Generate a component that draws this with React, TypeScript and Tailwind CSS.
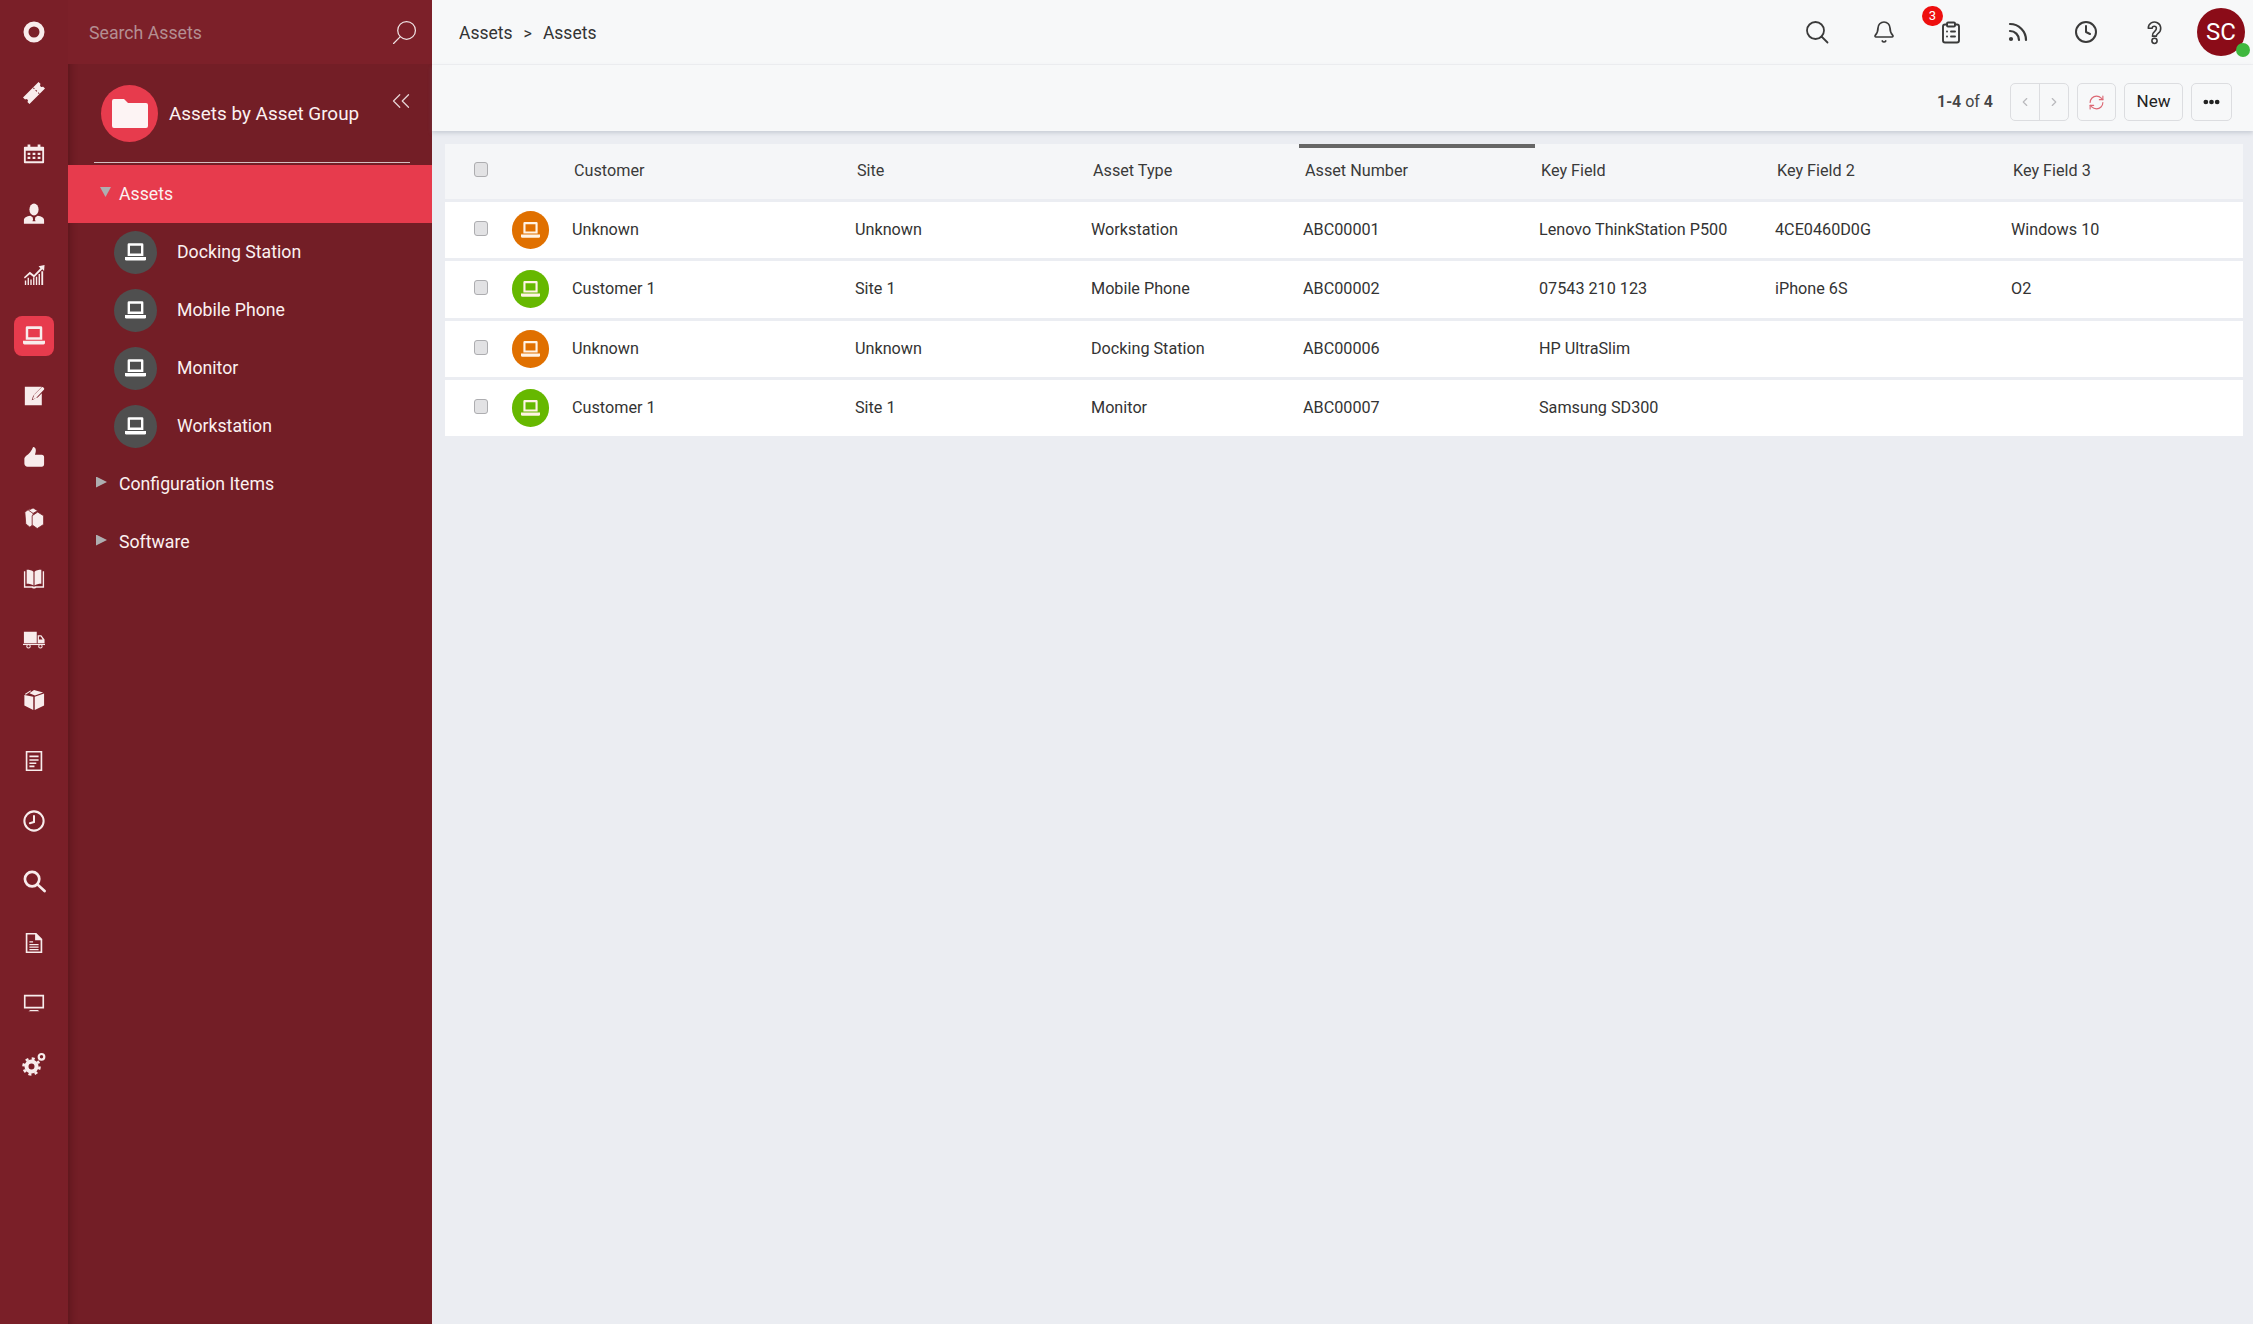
import React from "react";
import { Bell, ClipboardList, Rss, Clock, ChevronsLeft, ChevronLeft, ChevronRight, RefreshCw } from "lucide-react";

function Laptop({ className }: { className?: string }) {
  return (
    <svg viewBox="0 0 24 20" className={className} fill="currentColor">
      <path fillRule="evenodd" d="M4.500 0h15A1.500 1.500 0 0 1 21 1.500V14.500H3V1.500A1.500 1.500 0 0 1 4.500 0zm1.200 2.800v9h12.600v-9z" />
      <path d="M0 15.800h24v2.400a1.600 1.600 0 0 1-1.600 1.600H1.600A1.600 1.600 0 0 1 0 18.200z" />
    </svg>
  );
}

function Lens({ className, flip, width }: { className?: string; flip?: boolean; width: number }) {
  return (
    <svg viewBox="0 0 24 24" className={className} fill="none" stroke="currentColor" strokeWidth={width} strokeLinecap="round">
      {flip ? (
        <>
          <circle cx="14" cy="10" r="8.500" />
          <path d="M8 16l-6.500 6.500" />
        </>
      ) : (
        <>
          <circle cx="10.500" cy="10.500" r="8.500" />
          <path d="M16.500 16.500l6 6" />
        </>
      )}
    </svg>
  );
}

const S = ({ children }: { children: React.ReactNode }) => (
  <svg viewBox="0 0 24 24" className="w-[22px] h-[22px]" fill="currentColor">
    {children}
  </svg>
);

const railIcons: React.ReactNode[] = [
  <svg viewBox="0 0 24 24" className="w-[24px] h-[24px]" fill="none" stroke="currentColor" strokeWidth="5"><circle cx="12" cy="12" r="8" /></svg>,
  <S><g transform="rotate(-45 12 12)"><path fillRule="evenodd" d="M0 7h24v3.200a1.800 1.800 0 0 0 0 3.600V17H0v-3.200a1.800 1.800 0 0 0 0-3.600zM15 7.500v1.600h1V7.500zM15 11v2h1v-2zM15 15v1.600h1V15z" /></g></S>,
  <S><path fillRule="evenodd" d="M5 1.500h3V4h8V1.500h3V4h3a1 1 0 0 1 1 1v16a1 1 0 0 1-1 1H2a1 1 0 0 1-1-1V5a1 1 0 0 1 1-1h3zM3 8.500V20h18V8.500zM5 10.500h3v2.500H5zM10.500 10.500h3v2.500h-3zM16 10.500h3v2.500h-3zM5 15h3v2.500H5zM10.500 15h3v2.500h-3zM16 15h3v2.500h-3z" /></S>,
  <S><ellipse cx="12" cy="7" rx="5" ry="6.500" /><path fillRule="evenodd" d="M8 14l2.500 1.500L11 18l-.7 2h3.400l-.7-2 .5-2.500L16 14c4 .5 7 2 7 5v3.500H1V19c0-3 3-4.500 7-5z" /></S>,
  <S><path d="M2 18h1.500v5H2zM5 15h1.500v8H5zM8 17h1.500v6H8zM11 14.500h1.500V23H11zM14 14h1.500v9H14zM17 11h1.500v12H17zM20 8h2v15h-2z" /><path d="M1 14.500l6.500-6 4.500 3.500 7-7.500-2-2L23.500 1 23 7.500l-2-1.800-9 9-4.500-3.500-5.500 4.500z" /></S>,
  <Laptop className="w-[22px] h-[19px]" />,
  <S><path fillRule="evenodd" d="M2 2h18.500l-8 8-2 5.500 5.500-2 4.500-4.500V22H2zM14 14.500l-4.500 2 1.500-4.500 9.500-9.500c1-1 3.500 1.500 2.500 2.500z" /></S>,
  <S><path d="M11 1c2 0 3 1.500 3 3.500 0 2-.5 3.500-1 5h7.500c1.500 0 2.500 1 2.500 2.500v8c0 1.500-1 2.500-2.500 2.500H5c-2 0-3.500-1.500-3.500-3.500v-5c0-1.500 1-2.500 2-3.500 3-2 6-5 7.500-9.500z" /></S>,
  <svg viewBox="0 0 24 24" className="w-[22px] h-[22px]" fill="currentColor" stroke="#7a1f28" strokeWidth="0.900" strokeLinejoin="round">
    <path d="M2 5.500L7 2l4 3v14l-3.500 3L3 18.500z" />
    <path d="M6 3.500L11 1l5 3-5 3z" />
    <path d="M10 9.500L16 5.500l6.500 4V19L15.500 23.500 10 19.500z" />
  </svg>,
  <S><path fillRule="evenodd" d="M1 3.500h1.500V20h8.500c.5.500 1 .5 1 .5s.5 0 1-.5h8.500V3.500H23V21.500h-8.500c-.5 1-4.500 1-5 0H1zM4 2c3 0 6 .5 7.400 2v15c-1.500-1.300-4.400-1.800-7.400-1.800zM20 2c-3 0-6 .5-7.400 2v15c1.500-1.300 4.400-1.800 7.400-1.800z" /></S>,
  <S><path fillRule="evenodd" d="M1 4h14v12.500H1zM16 8h4l3.500 4.500v4H16zM17.400 9.300v3.200h4l-2-3.200z" /><path d="M0 17.300h24v1.300H0z" /><circle cx="6" cy="20" r="1.900" fill="none" stroke="currentColor" strokeWidth="1.100" /><circle cx="19" cy="20" r="1.900" fill="none" stroke="currentColor" strokeWidth="1.100" /></S>,
  <S><path d="M12.800 8.500L23 5v13l-10.200 5zM11.200 8.500V23L1.500 18V6.500zM2 5.500L8 1.500l1 .8-6 4zM7 4.500l5-3.500 10 2.800-9 3.400z" /></S>,
  <S><path fillRule="evenodd" d="M3 1h18v22H3zM4.800 2.800v18.400h14.400V2.800zM7 6h10v1.800H7zM7 10h10v1.800H7zM7 13.500h7.500v1.800H7zM7 17h5.500v1.800H7z" /></S>,
  <svg viewBox="0 0 24 24" className="w-[22px] h-[22px]" fill="none" stroke="currentColor" strokeWidth="2.200" strokeLinecap="round"><circle cx="12" cy="12" r="10.500" /><path d="M12 6.500V13l-4.500 1.500" /></svg>,
  <svg viewBox="0 0 24 24" className="w-[23px] h-[23px]" fill="none" stroke="currentColor" strokeWidth="2.800" strokeLinecap="round"><circle cx="9.500" cy="9.500" r="7.500" /><path d="M15 15l7.500 7" /></svg>,
  <S><path fillRule="evenodd" d="M3 1h11.500L21 7.500V23H3zM4.800 2.800v18.400h14.400V9h-6V2.800zM7 10h4v1.500H7zM7 13h10v1.500H7zM7 15.800h10v1.500H7zM7 18.500h10V20H7z" /></S>,
  <S><path fillRule="evenodd" d="M1 3h22v15H1zM2.800 4.800v11.400h18.400V4.800zM8 19.500h8l2 1.500H6z" /></S>,
  <svg viewBox="0 0 24 24" className="w-[24px] h-[24px]" fill="none" stroke="currentColor"><circle cx="9.500" cy="14.500" r="5" strokeWidth="4" /><circle cx="9.500" cy="14.500" r="8" strokeWidth="2.600" strokeDasharray="3 3.280" /><circle cx="19.500" cy="4.800" r="2.800" strokeWidth="2.200" /></svg>,
];

const groups = ["Docking Station", "Mobile Phone", "Monitor", "Workstation"];

type Row = { green: boolean; cells: string[] };
const rows: Row[] = [
  { green: false, cells: ["Unknown", "Unknown", "Workstation", "ABC00001", "Lenovo ThinkStation P500", "4CE0460D0G", "Windows 10"] },
  { green: true, cells: ["Customer 1", "Site 1", "Mobile Phone", "ABC00002", "07543 210 123", "iPhone 6S", "O2"] },
  { green: false, cells: ["Unknown", "Unknown", "Docking Station", "ABC00006", "HP UltraSlim", "", ""] },
  { green: true, cells: ["Customer 1", "Site 1", "Monitor", "ABC00007", "Samsung SD300", "", ""] },
];
const headers = ["Customer", "Site", "Asset Type", "Asset Number", "Key Field", "Key Field 2", "Key Field 3"];
const cols = "grid-cols-[127px_283px_236px_212px_236px_236px_236px_1fr]";

function Check() {
  return <div className="w-[14px] h-[15px] rounded-[3px] bg-[#e2e2e4] border border-[#adadb0]" />;
}

function Help() {
  return (
    <svg viewBox="0 0 24 24" className="w-[25px] h-[25px]" fill="none" stroke="#3a3a3a" strokeWidth="1.500" strokeLinejoin="round">
      <path d="M6 8a6 6 0 1 1 9.500 4.800c-1.200.9-1.700 1.500-1.700 2.700h-3.800c0-2.500 1-3.700 2.600-5 1-.8 1.200-1.200 1.200-2.500a2 2 0 0 0-4 0z" />
      <circle cx="12" cy="20" r="2.500" />
    </svg>
  );
}

export default function App() {
  return (
    <div className="flex h-[1324px] w-[2253px] overflow-hidden bg-[#ebedf2] font-['Roboto',sans-serif]">
      <nav className="w-[68px] shrink-0 flex flex-col items-center pt-[2px] bg-[#7a1f28] text-[#f8ecec]">
        {railIcons.map((icon, i) => (
          <div key={i} className="h-[60.700px] w-full shrink-0 flex items-center justify-center">
            <div className={i === 5 ? "w-[40px] h-[40px] rounded-[8px] bg-[#e73b4d] flex items-center justify-center" : "flex items-center justify-center"}>
              {icon}
            </div>
          </div>
        ))}
      </nav>

      <aside className="w-[364px] shrink-0 flex flex-col bg-[#731e26] text-[#fbf1f1] shadow-[inset_7px_0_7px_-5px_rgba(60,10,15,0.45)]">
        <div className="h-[64px] flex items-center justify-between pl-[21px] pr-[15px] bg-[#7c2029]">
          <span className="text-[17.700px] text-[#b48e92] mt-[3px]">Search Assets</span>
          <Lens flip width={1.200} className="w-[25px] h-[25px] text-[#efe2e3]" />
        </div>
        <div className="h-[98px] flex items-center pl-[33px] pr-[16px]">
          <div className="w-[57px] h-[57px] rounded-full bg-[#e73b4d] flex items-center justify-center">
            <svg viewBox="0 0 36 29" className="w-[36px] h-[29px]" fill="#fdf4f4">
              <path d="M2 0h10l4 4h18a2 2 0 0 1 2 2v21a2 2 0 0 1-2 2H2a2 2 0 0 1-2-2V2a2 2 0 0 1 2-2z" />
            </svg>
          </div>
          <span className="ml-[11px] mt-[3px] text-[18.900px]">Assets by Asset Group</span>
          <ChevronsLeft className="ml-auto mb-[24px] w-[30px] h-[30px] text-[#e6d3d4]" strokeWidth={1} />
        </div>
        <div className="h-px ml-[26px] mr-[22px] bg-[#d5bfc1]" />
        <div className="mt-[2px] h-[58px] flex items-center pl-[32px] bg-[#e73b4d]">
          <div className="w-[11px] h-[10px] mb-[4px] bg-[#aeaeb0] [clip-path:polygon(0_0,100%_0,50%_100%)]" />
          <span className="ml-[8px] text-[17.700px]">Assets</span>
        </div>
        {groups.map((g) => (
          <div key={g} className="h-[58px] flex items-center pl-[46px]">
            <div className="w-[43px] h-[43px] rounded-full bg-[#4f4f4f] flex items-center justify-center text-white">
              <Laptop className="w-[21px] h-[18px]" />
            </div>
            <span className="ml-[20px] text-[17.700px]">{g}</span>
          </div>
        ))}
        {["Configuration Items", "Software"].map((g) => (
          <div key={g} className="h-[58px] flex items-center pl-[28px]">
            <div className="w-[11px] h-[11px] mb-[4px] bg-[#aeaeb0] [clip-path:polygon(0_0,100%_50%,0_100%)]" />
            <span className="ml-[12px] text-[17.700px]">{g}</span>
          </div>
        ))}
      </aside>

      <main className="flex-1 min-w-0 flex flex-col text-[#333]">
        <header className="h-[65px] shrink-0 flex items-center bg-[#f7f8f9] border-b border-[#f0f1f3] pl-[27px] pr-[8px]">
          <span className="text-[17.500px] mt-[3px]">Assets</span>
          <span className="text-[16px] mx-[11px] mt-[3px]">&gt;</span>
          <span className="text-[17.500px] mt-[3px]">Assets</span>
          <div className="ml-auto flex items-center">
            <Lens width={1.800} className="w-[24px] h-[24px] text-[#3a3a3a] mr-[43px] ml-[1px]" />
            <Bell className="w-[24px] h-[24px] text-[#3a3a3a] mr-[43px]" strokeWidth={1.7} />
            <div className="relative mr-[43px]">
              <ClipboardList className="w-[24px] h-[25px] text-[#3a3a3a]" strokeWidth={1.9} />
              <span className="absolute -top-[14px] -left-[17px] w-[21px] h-[20px] rounded-full bg-[#ee0f0f] text-white text-[13px] flex items-center justify-center">3</span>
            </div>
            <Rss className="w-[24px] h-[24px] text-[#3a3a3a] mr-[44px]" strokeWidth={2.200} />
            <Clock className="w-[24px] h-[24px] text-[#3a3a3a] mr-[44px]" strokeWidth={2} />
            <div className="mr-[30px]"><Help /></div>
            <div className="relative w-[48px] h-[48px] rounded-full bg-[#8b0c18] text-white text-[24px] flex items-center justify-center">
              SC
              <span className="absolute right-[-5px] bottom-[-1px] w-[14px] h-[14px] rounded-full bg-[#3fb83f]" />
            </div>
          </div>
        </header>

        <div className="h-[66px] shrink-0 flex items-center justify-end bg-[#f7f8f9] shadow-[0_2px_4px_rgba(120,130,145,0.3)] pr-[21px] pt-[8px]">
          <span className="text-[16px] text-[#444] mr-[17px]"><b className="font-semibold">1-4</b> of <b className="font-semibold">4</b></span>
          <div className="flex w-[59px] h-[38px] rounded-[5px] border border-[#dcdde0] mr-[8px]">
            <div className="flex-1 flex items-center justify-center border-r border-[#dcdde0]"><ChevronLeft className="w-[14px] h-[14px] text-[#b9b9bd]" /></div>
            <div className="flex-1 flex items-center justify-center"><ChevronRight className="w-[14px] h-[14px] text-[#b9b9bd]" /></div>
          </div>
          <div className="w-[39px] h-[38px] rounded-[5px] border border-[#dcdde0] flex items-center justify-center mr-[8px]">
            <RefreshCw className="w-[17px] h-[17px] text-[#dc6874]" strokeWidth={1.600} />
          </div>
          <div className="w-[59px] h-[38px] rounded-[5px] border border-[#dcdde0] flex items-center justify-center text-[17px] text-[#222] mr-[8px]">New</div>
          <div className="w-[41px] h-[38px] rounded-[5px] border border-[#dcdde0] flex items-center justify-center">
            <svg viewBox="0 0 18 6" className="w-[17px] h-[6px]" fill="#222"><circle cx="3" cy="3" r="2.500" /><circle cx="9" cy="3" r="2.500" /><circle cx="15" cy="3" r="2.500" /></svg>
          </div>
        </div>

        <div className="pt-[13px] pl-[13px] pr-[10px] flex flex-col gap-[3px]">
          <div className={`relative h-[55px] grid ${cols} items-center bg-[#f5f6f8] text-[16.200px] text-[#3a3a3a]`}>
            <div className="pl-[29px] mb-[5px]"><Check /></div>
            {headers.map((h) => (
              <div key={h} className="pl-[2px] mb-[1px]">{h}</div>
            ))}
            <div className="absolute top-0 left-[854px] w-[236px] h-[4px] bg-[#666]" />
          </div>
          {rows.map((r, i) => (
            <div key={i} className={`h-[56.300px] grid ${cols} items-center bg-white text-[16.200px] text-[#333]`}>
              <div className="pl-[29px] flex items-center">
                <div className="mb-[3px]"><Check /></div>
                <div className={`ml-[24px] w-[37px] h-[38px] rounded-full flex items-center justify-center text-[#fff3e4] ${r.green ? "bg-[#66b800]" : "bg-[#e07000]"}`}>
                  <Laptop className="w-[19px] h-[16px]" />
                </div>
              </div>
              {r.cells.map((c, j) => (
                <div key={j} className="whitespace-nowrap">{c}</div>
              ))}
            </div>
          ))}
        </div>
      </main>
    </div>
  );
}
